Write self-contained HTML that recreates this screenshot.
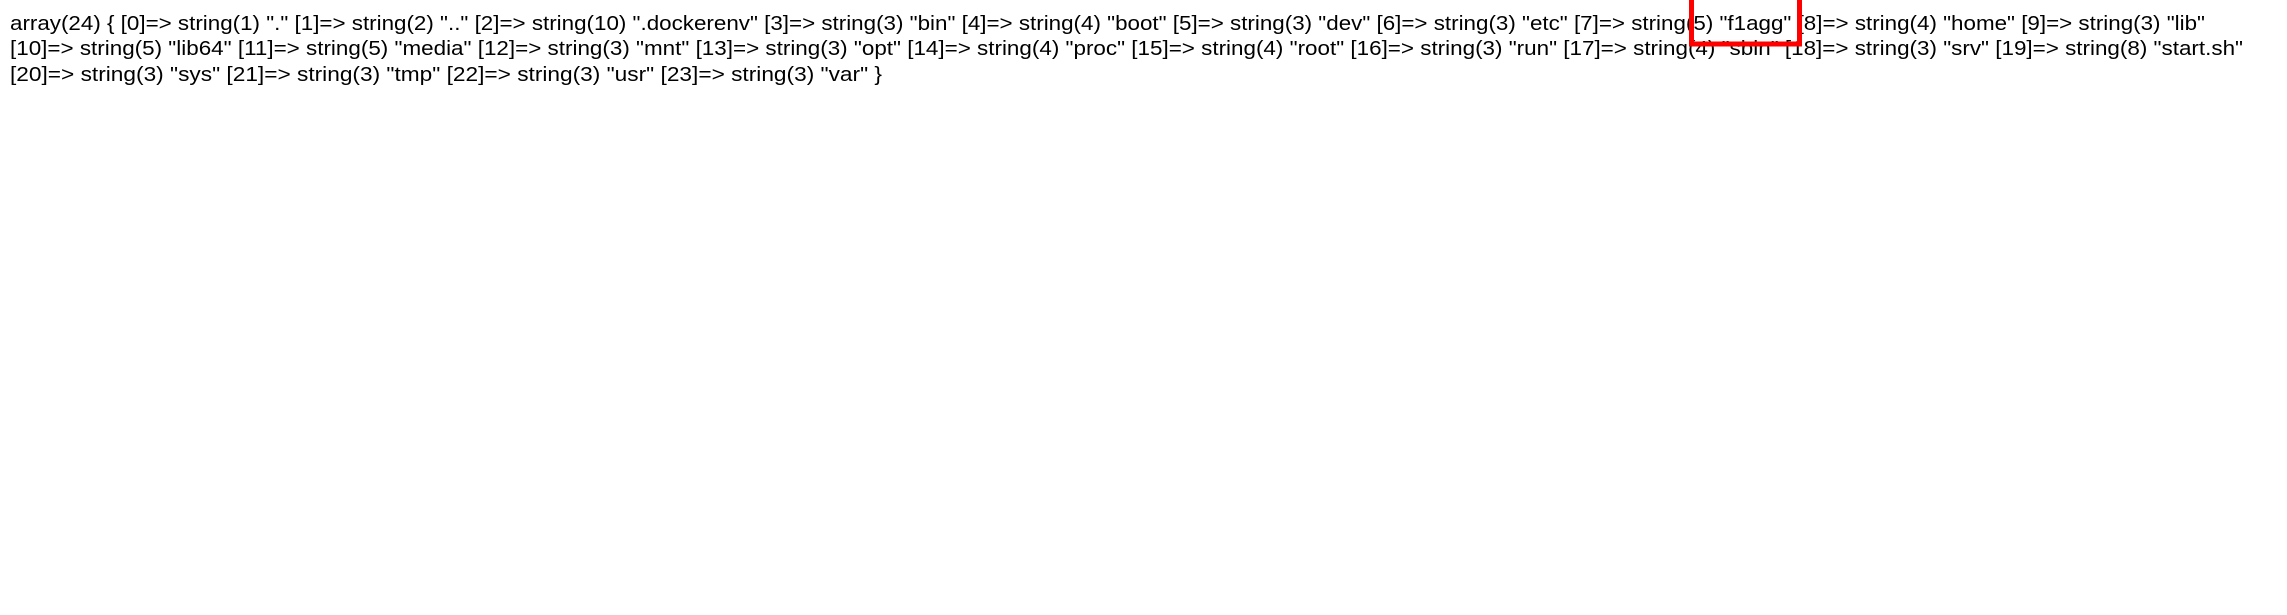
<!DOCTYPE html>
<html><head><meta charset="utf-8"><style>
html,body{margin:0;padding:0;background:#fff;width:2287px;height:615px;overflow:hidden}
svg{display:block}
text{font-family:"Liberation Sans",sans-serif;font-size:20px;fill:#000}
</style></head><body>
<svg width="2287" height="615" xmlns="http://www.w3.org/2000/svg">
<text x="10" y="30" textLength="2195" lengthAdjust="spacingAndGlyphs">array(24) { [0]=&gt; string(1) "." [1]=&gt; string(2) ".." [2]=&gt; string(10) ".dockerenv" [3]=&gt; string(3) "bin" [4]=&gt; string(4) "boot" [5]=&gt; string(3) "dev" [6]=&gt; string(3) "etc" [7]=&gt; string(5) "f1agg" [8]=&gt; string(4) "home" [9]=&gt; string(3) "lib"</text>
<text x="10" y="55" textLength="2233" lengthAdjust="spacingAndGlyphs">[10]=&gt; string(5) "lib64" [11]=&gt; string(5) "media" [12]=&gt; string(3) "mnt" [13]=&gt; string(3) "opt" [14]=&gt; string(4) "proc" [15]=&gt; string(4) "root" [16]=&gt; string(3) "run" [17]=&gt; string(4) "sbin" [18]=&gt; string(3) "srv" [19]=&gt; string(8) "start.sh"</text>
<text x="10" y="81" textLength="872" lengthAdjust="spacingAndGlyphs">[20]=&gt; string(3) "sys" [21]=&gt; string(3) "tmp" [22]=&gt; string(3) "usr" [23]=&gt; string(3) "var" }</text>
<rect x="1691.5" y="-3" width="108" height="47" fill="none" stroke="#f00" stroke-width="5"/>
</svg>
</body></html>
